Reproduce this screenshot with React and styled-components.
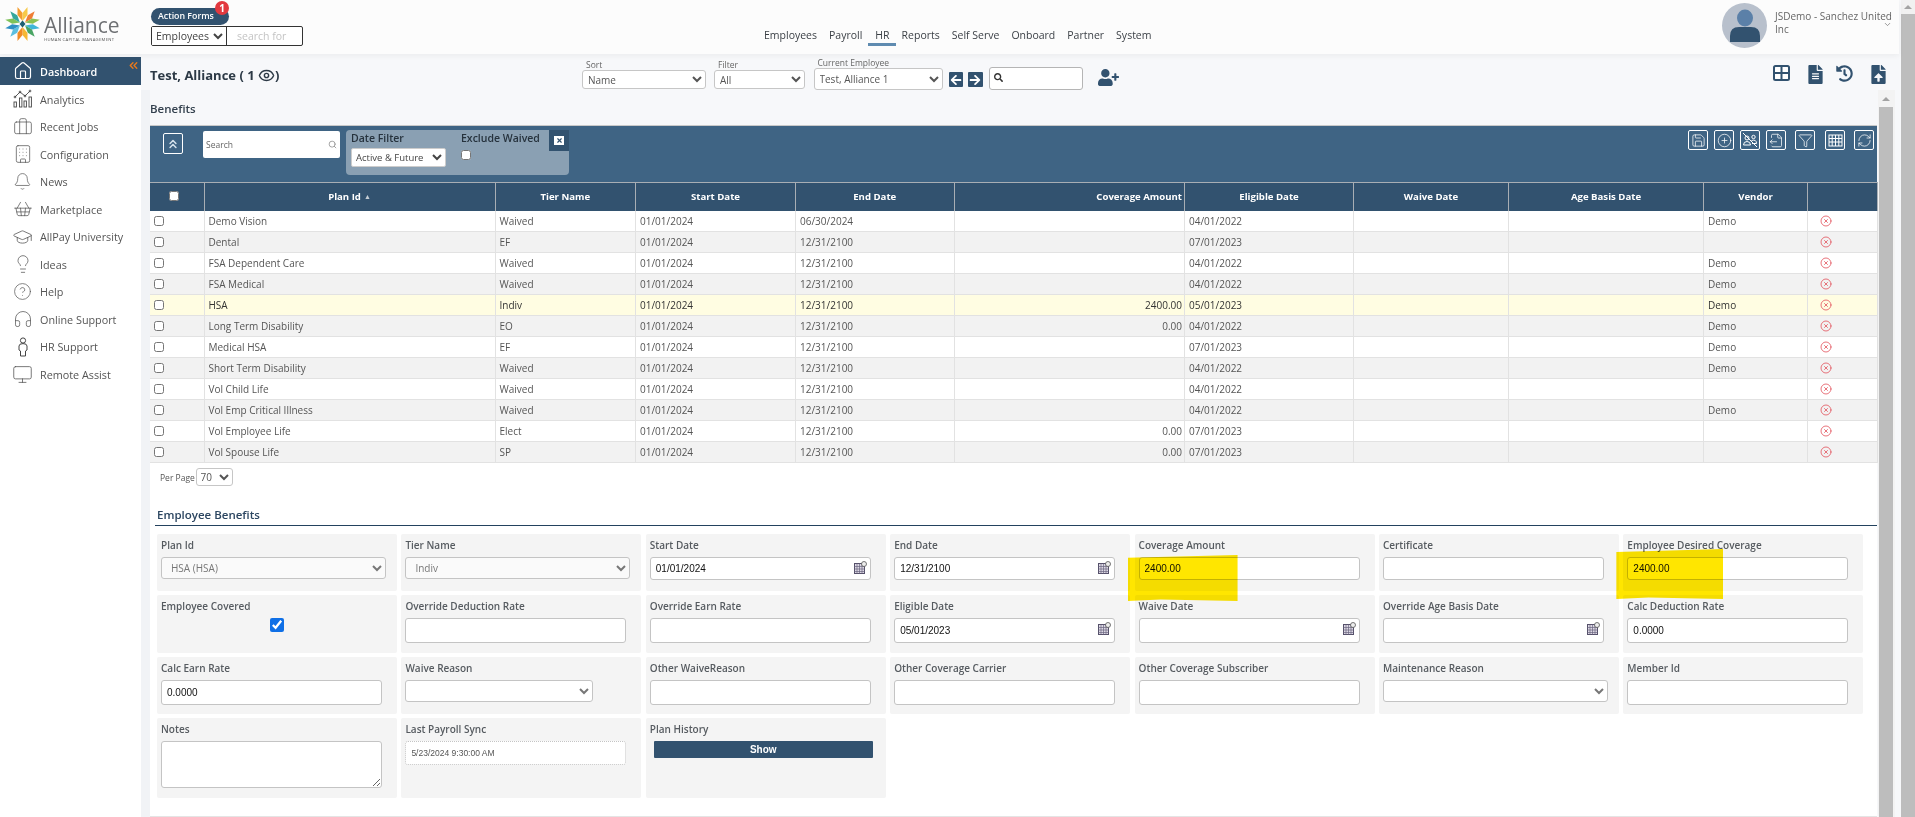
import React from "react";
import styled, { createGlobalStyle } from "styled-components";
import {
  Home, Briefcase, Building, Bell, ShoppingBasket, GraduationCap, Lightbulb,
  CircleHelp, Headphones, Monitor, ChevronsLeft, ChevronsUp, ChevronDown, Eye, Search,
  Save, CirclePlus, FileOutput, Filter, RefreshCw, CircleX, X,
} from "lucide-react";
import {
  FaFileAlt, FaHistory, FaFileUpload, FaUserPlus, FaArrowLeft, FaArrowRight, FaSearch,
} from "react-icons/fa";

const NAVY = "#32526f";
const FONT = `"Open Sans", "Noto Sans", sans-serif`;

const GlobalStyle = createGlobalStyle`
  html, body { margin: 0; padding: 0; height: 100%; overflow: hidden; }
  body { font-family: ${FONT}; background: #f7f8fa; color: #555; }
  * { box-sizing: border-box; }
`;

const Page = styled.div`
  display: flex;
  width: 1915px;
  height: 817px;
  overflow: hidden;
`;

const Shell = styled.div`
  display: flex;
  flex-direction: column;
  width: 1901px;
  height: 100%;
`;

const PageScroll = styled.div`
  width: 14px;
  display: flex;
  flex-direction: column;
  background: #f1f1f1;
`;

const ScrollArrow = styled.div`
  height: ${(p) => p.$h || 14}px;
  display: flex;
  align-items: center;
  justify-content: center;
  &::before {
    content: "";
    border-left: 4px solid transparent;
    border-right: 4px solid transparent;
    border-bottom: 4px solid #a3a3a3;
  }
`;

const ScrollThumb = styled.div`
  flex: 1;
  background: #bdbdbd;
`;

/* header */
const Header = styled.header`
  display: flex;
  flex: 0 0 54px;
  width: 1899px;
  background: #fcfcfc;
  box-shadow: 0 2px 6px rgba(0, 0, 0, 0.05);
  position: relative;
  z-index: 3;
`;

const LogoWrap = styled.div`
  width: 151px;
  display: flex;
  padding: 6px 0 0 4px;
`;

const LogoText = styled.div`
  display: flex;
  flex-direction: column;
  margin: 7px 0 0 3px;
`;

const LogoName = styled.span`
  font-size: 21px;
  line-height: 24px;
  color: #6e7073;
`;

const LogoSub = styled.span`
  font-size: 4.2px;
  line-height: 6px;
  color: #555;
  letter-spacing: 0.3px;
  white-space: nowrap;
`;

const ActionBox = styled.div`
  width: 152px;
  padding-top: 8px;
  display: flex;
  flex-direction: column;
`;

const ActionPill = styled.div`
  width: 78px;
  height: 17px;
  border-radius: 9px;
  background: ${NAVY};
  color: #fff;
  font-size: 8.8px;
  font-weight: 600;
  line-height: 17px;
  padding-left: 7px;
  position: relative;
`;

const Badge = styled.span`
  position: absolute;
  right: 0;
  top: -7px;
  width: 14px;
  height: 14px;
  border-radius: 50%;
  background: #e2393f;
  color: #fff;
  font-size: 10px;
  font-weight: 700;
  line-height: 14px;
  text-align: center;
`;

const QuickSearch = styled.div`
  display: flex;
  height: 20px;
  width: 152px;
  margin-top: 1px;
  border: 1px solid #333;
  border-radius: 2px;
  background: #fff;
`;

const QuickSelect = styled.select`
  width: 75px;
  border: 0;
  border-right: 1px solid #333;
  background: #fff;
  font-family: ${FONT};
  font-size: 10.5px;
  color: #444;
  padding: 0;
  outline: none;
`;

const QuickInput = styled.input`
  flex: 1;
  min-width: 0;
  border: 0;
  background: transparent;
  font-family: ${FONT};
  font-size: 10.5px;
  padding-left: 10px;
  outline: none;
  &::placeholder { color: #c4c4c4; }
`;

const Nav = styled.nav`
  display: flex;
  margin: 28px 0 0 455px;
  height: 18px;
`;

const NavItem = styled.a`
  height: 18px;
  padding: 0 6px 0 ${(p) => (p.$active ? 7 : 6)}px;
  font-size: 10.5px;
  font-weight: 500;
  line-height: 15px;
  color: #3a3f45;
  white-space: nowrap;
  border-bottom: 3px solid ${(p) => (p.$active ? "#5f8bb0" : "transparent")};
`;

const UserBlock = styled.div`
  display: flex;
  margin-left: auto;
  width: 177px;
  padding-top: 3px;
  position: relative;
`;

const UserName = styled.div`
  width: 118px;
  margin: 7px 0 0 8px;
  font-size: 10px;
  line-height: 13px;
  color: #666;
`;

const UserCaret = styled.span`
  position: absolute;
  right: 7px;
  top: 20px;
  display: flex;
  color: #777;
`;

/* body */
const Body = styled.div`
  flex: 1;
  display: flex;
  min-height: 0;
`;

const Sidebar = styled.aside`
  width: 141px;
  margin-top: 3px;
  background: #fff;
  position: relative;
`;

const Collapse = styled.span`
  position: absolute;
  right: 1px;
  top: 2px;
  display: flex;
  color: #e8791c;
`;

const SideItem = styled.a`
  display: flex;
  align-items: center;
  height: ${(p) => (p.$active ? 28 : 27.5)}px;
  margin-bottom: ${(p) => (p.$active ? 0.5 : 0)}px;
  padding-left: 12px;
  gap: 7px;
  background: ${(p) => (p.$active ? NAVY : "transparent")};
  color: ${(p) => (p.$active ? "#fff" : "#555")};
  font-size: 10.8px;
  font-weight: ${(p) => (p.$active ? 600 : 400)};
  white-space: nowrap;
`;

const SideIcon = styled.span`
  width: 21px;
  flex: 0 0 21px;
  display: flex;
  justify-content: center;
  align-items: center;
`;

const Main = styled.main`
  flex: 1;
  min-width: 0;
  display: flex;
  flex-direction: column;
  background: #f7f8fa;
`;

const TopRow = styled.div`
  flex: 0 0 36px;
  display: flex;
  padding: 0 13.5px 0 9px;
`;

const Title = styled.h1`
  width: 432px;
  margin: 13px 0 0;
  display: flex;
  align-items: center;
  height: 16px;
  font-size: 13px;
  font-weight: 700;
  color: #2d3a46;
  white-space: pre;
`;

const FilterField = styled.label`
  display: flex;
  flex-direction: column;
  width: ${(p) => p.$w}px;
  margin: ${(p) => p.$top}px ${(p) => p.$gap}px 0 0;
  font-size: 8.5px;
  line-height: 10px;
  color: #666;
`;

const FieldCaption = styled.span`
  padding-left: ${(p) => p.$indent || 4}px;
`;

const TopSelect = styled.select`
  width: 100%;
  height: ${(p) => p.$h}px;
  border: 1px solid #c6c6c6;
  border-radius: 3px;
  background: #fff;
  font-family: ${FONT};
  font-size: 10px;
  color: #555;
  padding-left: 1px;
  outline: none;
`;

const ArrowBtn = styled.button`
  width: 14.5px;
  height: 15px;
  margin: 18px 5px 0 0;
  padding: 0;
  border: 0;
  border-radius: 1px;
  background: ${NAVY};
  color: #fff;
  display: flex;
  align-items: center;
  justify-content: center;
`;

const TopSearch = styled.div`
  width: 94px;
  height: 23px;
  margin: 13px 15px 0 1px;
  border: 1px solid #b5b5b5;
  border-radius: 3px;
  background: #fff;
  display: flex;
  padding: 5px 0 0 4px;
  color: #333;
`;

const AddUser = styled.span`
  display: flex;
  margin-top: 13px;
  color: ${NAVY};
`;

const TopIcons = styled.div`
  display: flex;
  align-items: flex-start;
  margin: 11px 0 0 auto;
  color: ${NAVY};
`;

const TopIcon = styled.span`
  display: flex;
  margin-left: ${(p) => p.$gap || 0}px;
`;

const ScrollRow = styled.div`
  flex: 1;
  display: flex;
  min-height: 0;
`;

const Content = styled.div`
  width: 1736px;
  padding-left: 9px;
  background: linear-gradient(90deg, #f1f3f6 9px, transparent 9px);
`;

const SectionLabel = styled.h2`
  margin: 0;
  height: 35px;
  padding-top: 11px;
  font-size: 11.5px;
  line-height: 15px;
  font-weight: 600;
  color: #33404d;
  background: #f7f8fa;
`;

const InnerScroll = styled.div`
  width: 17px;
  margin-left: 0.5px;
  padding: 0 1.5px;
  display: flex;
  flex-direction: column;
  background: #f3f3f3;
`;

/* grid panel */
const GridBar = styled.div`
  height: 57px;
  display: flex;
  align-items: flex-start;
  background: #3f6484;
  border-top: 1px solid #c9c9c9;
`;

const CollapseBtn = styled.div`
  width: 20px;
  height: 21px;
  margin: 7px 0 0 13px;
  border: 1px solid #fff;
  border-radius: 2px;
  display: flex;
  align-items: center;
  justify-content: center;
  color: #d5e2ec;
`;

const GridSearch = styled.div`
  width: 137px;
  height: 27px;
  margin: 5px 0 0 20px;
  background: #fff;
  border-radius: 2px;
  display: flex;
  align-items: center;
  justify-content: space-between;
  padding: 0 3px;
  font-size: 8.5px;
  color: #666;
`;

const DatePanel = styled.div`
  width: 223px;
  height: 45px;
  margin: 4px 0 0 6px;
  padding: 1px 5px;
  background: #8aa0b3;
  border-radius: 4px;
  display: flex;
  position: relative;
`;

const DateCol = styled.div`
  width: ${(p) => p.$w}px;
  display: flex;
  flex-direction: column;
  font-size: 10.5px;
  font-weight: 600;
  line-height: 14px;
  color: #26323d;
  white-space: nowrap;
`;

const DateSelect = styled.select`
  width: 95px;
  height: 19px;
  margin-top: 3px;
  border: 1px solid #ccc;
  border-radius: 2px;
  background: #fff;
  font-family: ${FONT};
  font-size: 9.5px;
  color: #444;
  padding: 0;
  outline: none;
`;

const SmallCheck = styled.input.attrs({ type: "checkbox" })`
  width: 10px;
  height: 10px;
  margin: ${(p) => p.$m || 0};
  display: block;
`;

const PanelClose = styled.span`
  position: absolute;
  right: 0;
  top: 0;
  width: 20px;
  height: 21px;
  background: ${NAVY};
  display: flex;
  align-items: center;
  justify-content: center;
`;

const CloseMark = styled.span`
  width: 10px;
  height: 9px;
  background: #fff;
  display: flex;
  align-items: center;
  justify-content: center;
  color: ${NAVY};
`;

const GridTools = styled.div`
  display: flex;
  margin: 4px 3px 0 auto;
`;

const ToolBtn = styled.span`
  width: 20px;
  height: 20px;
  margin-left: ${(p) => p.$gap}px;
  border: 1px solid #fff;
  border-radius: 2px;
  color: #fff;
  display: flex;
  align-items: center;
  justify-content: center;
`;

const Table = styled.table`
  width: 1727px;
  table-layout: fixed;
  border-collapse: collapse;
`;

const Th = styled.th`
  height: 28px;
  padding: 0 ${(p) => (p.$right ? 2 : 4)}px 0 4px;
  background: ${NAVY};
  border: 1px solid #a8aeb4;
  border-width: 1px 1px 0 0;
  color: #fff;
  font-size: 9.6px;
  font-weight: 700;
  text-align: ${(p) => (p.$right ? "right" : "center")};
`;

const SortMark = styled.span`
  font-size: 7px;
  margin-left: 3px;
  color: #c5ced6;
  vertical-align: 1px;
`;

const Tr = styled.tr`
  height: 21px;
  background: ${(p) => (p.$current ? "#fffde2" : p.$alt ? "#f2f2f2" : "#fff")};
  color: ${(p) => (p.$current ? "#333" : "#555")};
`;

const Td = styled.td`
  padding: 0 ${(p) => (p.$right ? 2 : 4)}px 0 4px;
  border: 1px solid #e2e2e2;
  border-width: 0 1px 1px 0;
  font-size: 10px;
  line-height: 12px;
  text-align: ${(p) => (p.$right ? "right" : "left")};
  white-space: nowrap;
  overflow: hidden;
`;

const DeleteIcon = styled.span`
  display: flex;
  margin-left: 8px;
  color: #e2505a;
`;

const GridFoot = styled.div`
  height: 33px;
  display: flex;
  padding: 5px 0 0 10px;
  font-size: 8.5px;
  line-height: 20px;
  color: #555;
  background: #fff;
`;

const PerPageLabel = styled.span`
  width: 35.5px;
  white-space: nowrap;
`;

const PerPageSelect = styled.select`
  width: 37px;
  height: 18px;
  border: 1px solid #c6c6c6;
  border-radius: 3px;
  background: #fff;
  font-family: ${FONT};
  font-size: 10px;
  color: #555;
  padding: 0;
  outline: none;
`;

/* form */
const FormPanel = styled.section`
  background: #fff;
  height: 321px;
  padding-left: 5px;
  border-bottom: 1px solid #e4e4e4;
`;

const FormTitle = styled.h3`
  margin: 0;
  height: 30px;
  padding: 11px 0 0 2px;
  font-size: 11.5px;
  line-height: 16px;
  font-weight: 600;
  color: #2b4560;
  border-bottom: 1px solid #23425e;
`;

const FormGrid = styled.div`
  display: grid;
  grid-template-columns: repeat(7, 240px);
  grid-template-rows: 57px 58px 57px 80px;
  column-gap: 4.4px;
  row-gap: 4px;
  padding: 8px 0 0 2px;
`;

const Card = styled.div`
  position: relative;
  padding: 0 4px;
  background: #f4f4f4;
  border-radius: 2px;
`;

const FieldLabel = styled.div`
  height: 23px;
  font-size: 10px;
  font-weight: 600;
  line-height: 23px;
  color: #565b60;
  white-space: nowrap;
`;

const TextBox = styled.input`
  display: block;
  width: 221px;
  height: ${(p) => p.$h || 25}px;
  padding: 0 5px;
  border: 1px solid #c4c4c4;
  border-radius: 3px;
  background: #fff;
  font-family: "Liberation Sans", Arial, sans-serif;
  font-size: 10px;
  color: #111;
  outline: none;
`;

const FormSelect = styled.select`
  display: block;
  width: ${(p) => p.$w || 225}px;
  height: 22px;
  padding-left: 5px;
  border: 1px solid #c4c4c4;
  border-radius: 3px;
  background: ${(p) => (p.disabled ? "#fafafa" : "#fff")};
  opacity: 1;
  font-family: ${FONT};
  font-size: 10px;
  color: #777;
  outline: none;
`;

const DateWrap = styled.div`
  position: relative;
  width: 221px;
`;

const CalIcon = styled.svg`
  position: absolute;
  right: 4px;
  top: 4px;
`;

const CoveredCheck = styled.input.attrs({ type: "checkbox" })`
  display: block;
  width: 14px;
  height: 14px;
  margin: 0 0 0 109px;
  accent-color: #0f6fe6;
`;

const Notes = styled.textarea`
  display: block;
  width: 221px;
  height: 47px;
  border: 1px solid #c4c4c4;
  border-radius: 3px;
  background: #fff;
`;

const ReadOnlyBox = styled.div`
  width: 221px;
  height: 24px;
  padding-left: 5px;
  border: 1px dotted #c4c4c4;
  border-radius: 3px;
  background: #fff;
  font-family: "Liberation Sans", Arial, sans-serif;
  font-size: 8.5px;
  line-height: 22px;
  color: #555;
`;

const ShowBtn = styled.button`
  display: block;
  width: 219px;
  height: 17px;
  margin-left: 4px;
  padding: 0;
  border: 0;
  border-radius: 1px;
  background: ${NAVY};
  color: #fff;
  font-family: "Liberation Sans", Arial, sans-serif;
  font-size: 10px;
  font-weight: 700;
`;

/* marker strokes somebody painted on the screenshot */
const Marker = styled.span`
  position: absolute;
  left: -7px;
  top: ${(p) => p.$top}px;
  width: ${(p) => p.$w}px;
  height: ${(p) => p.$h}px;
  background: #ffe600;
  mix-blend-mode: multiply;
  clip-path: polygon(0 6%, 100% 0, 100% 100%, 30% 97%, 0 100%);
  z-index: 2;
`;

const COLS = [54, 291, 140.5, 160, 158.5, 230.5, 169, 155, 195, 104, 69.5];

const ROWS = [
  ["Demo Vision", "Waived", "06/30/2024", "", "04/01/2022", "Demo"],
  ["Dental", "EF", "12/31/2100", "", "07/01/2023", ""],
  ["FSA Dependent Care", "Waived", "12/31/2100", "", "04/01/2022", "Demo"],
  ["FSA Medical", "Waived", "12/31/2100", "", "04/01/2022", "Demo"],
  ["HSA", "Indiv", "12/31/2100", "2400.00", "05/01/2023", "Demo"],
  ["Long Term Disability", "EO", "12/31/2100", "0.00", "04/01/2022", "Demo"],
  ["Medical HSA", "EF", "12/31/2100", "", "07/01/2023", "Demo"],
  ["Short Term Disability", "Waived", "12/31/2100", "", "04/01/2022", "Demo"],
  ["Vol Child Life", "Waived", "12/31/2100", "", "04/01/2022", ""],
  ["Vol Emp Critical Illness", "Waived", "12/31/2100", "", "04/01/2022", "Demo"],
  ["Vol Employee Life", "Elect", "12/31/2100", "0.00", "07/01/2023", ""],
  ["Vol Spouse Life", "SP", "12/31/2100", "0.00", "07/01/2023", ""],
];

const AnalyticsIcon = () => (
  <svg width="20" height="20" viewBox="0 0 20 20" fill="none" stroke="#444" strokeWidth="0.9">
    <rect x="1" y="13" width="2.4" height="5" />
    <rect x="6.5" y="9" width="2.4" height="9" />
    <rect x="11" y="12" width="2.4" height="6" />
    <rect x="16" y="8" width="2.4" height="10" />
    <path d="M2 8 L7 3 L12 7 L17 2" />
    <circle cx="2" cy="8" r="0.9" />
    <circle cx="7" cy="3" r="0.9" />
    <circle cx="12" cy="7" r="0.9" />
    <circle cx="17" cy="2" r="0.9" />
  </svg>
);

const PersonIcon = () => (
  <svg width="14" height="20" viewBox="0 0 14 20" fill="none" stroke="#444" strokeWidth="1">
    <circle cx="7" cy="3.5" r="2.6" />
    <path d="M3 9 Q3 6.6 7 6.6 Q11 6.6 11 9 V13 L9.5 14 V19 H4.5 V14 L3 13 Z" />
  </svg>
);

const TilesIcon = () => (
  <svg width="17" height="16" viewBox="0 0 17 16">
    <rect x="1" y="1" width="15" height="14" rx="1.5" fill="#fff" stroke={NAVY} strokeWidth="2" />
    <path d="M8.5 1 V15 M1 8 H16" stroke={NAVY} strokeWidth="2" />
  </svg>
);

const NoPeopleIcon = () => (
  <svg width="16" height="16" viewBox="0 0 16 16" fill="none" stroke="#fff" strokeWidth="1">
    <circle cx="5" cy="6" r="2" />
    <path d="M1.5 13 Q1.5 9.5 5 9.5 Q8.5 9.5 8.5 13 Z" />
    <circle cx="11.5" cy="5" r="1.7" />
    <path d="M9.5 8.5 Q14.5 7 14.5 11.5 H10" />
    <path d="M1 1 L15 15" />
  </svg>
);

const TableIcon = () => (
  <svg width="15" height="15" viewBox="0 0 15 15" fill="none" stroke="#fff" strokeWidth="1">
    <rect x="1" y="2" width="13" height="11" />
    <path d="M1 5.5 H14 M1 9 H14 M4.2 2 V13 M7.5 2 V13 M10.8 2 V13" />
  </svg>
);

const SIDE = [
  ["Dashboard", <Home size={20} strokeWidth={1.4} />],
  ["Analytics", <AnalyticsIcon />],
  ["Recent Jobs", <Briefcase size={20} strokeWidth={0.9} />],
  ["Configuration", <Building size={20} strokeWidth={0.9} />],
  ["News", <Bell size={19} strokeWidth={0.9} />],
  ["Marketplace", <ShoppingBasket size={20} strokeWidth={0.9} />],
  ["AllPay University", <GraduationCap size={22} strokeWidth={0.9} />],
  ["Ideas", <Lightbulb size={20} strokeWidth={0.9} />],
  ["Help", <CircleHelp size={19} strokeWidth={0.9} />],
  ["Online Support", <Headphones size={20} strokeWidth={0.9} />],
  ["HR Support", <PersonIcon />],
  ["Remote Assist", <Monitor size={21} strokeWidth={0.9} />],
];

const Logo = () => {
  const petals = [
    [0, "#f39c2d", "#f7c948"],
    [60, "#ef7d34", "#8cc152"],
    [120, "#3fb6d8", "#4aa564"],
    [180, "#f7b733", "#f08a24"],
    [240, "#5cbfe0", "#2f8fc4"],
    [300, "#7fc25a", "#35a79c"],
  ];
  return (
    <svg width="37" height="36" viewBox="-18 -18 36 36">
      {petals.map(([a, c1, c2]) => (
        <g key={a} transform={`rotate(${a})`}>
          <polygon points="0,-3 -5,-9 -5,-17 0,-11" fill={c1} />
          <polygon points="0,-3 5,-9 5,-17 0,-11" fill={c2} />
        </g>
      ))}
      <polygon points="0,-3.4 3,0 0,3.4 -3,0" fill="#1e5f74" />
    </svg>
  );
};

const Avatar = () => (
  <svg width="45" height="45" viewBox="0 0 45 45">
    <circle cx="22.5" cy="22.5" r="22.5" fill="#b8c0cc" />
    <ellipse cx="23" cy="15" rx="8" ry="8.5" fill="#5b80a8" />
    <path d="M8 39 V33 Q8 24 17 24 H29 Q38 24 38 33 V39 Z" fill={NAVY} />
  </svg>
);

const Calendar = () => (
  <CalIcon width="13" height="13" viewBox="0 0 13 13">
    <rect x="0.5" y="2.5" width="10" height="10" fill="#dcd8e4" stroke="#55506a" />
    <path d="M0.5 5.5 H10.5 M0.5 8 H10.5 M0.5 10.5 H10.5 M3 2.5 V12.5 M5.5 2.5 V12.5 M8 2.5 V12.5" stroke="#6a6580" strokeWidth="0.7" />
    <circle cx="10" cy="3" r="2.5" fill="#eee" stroke="#555" strokeWidth="0.8" />
  </CalIcon>
);

const DateField = ({ label, value, h }) => (
  <Card>
    <FieldLabel>{label}</FieldLabel>
    <DateWrap>
      <TextBox $h={h} defaultValue={value} />
      <Calendar />
    </DateWrap>
  </Card>
);

const TextField = ({ label, value, h, children }) => (
  <Card>
    <FieldLabel>{label}</FieldLabel>
    <TextBox $h={h} defaultValue={value} />
    {children}
  </Card>
);

const SelectField = ({ label, value, w, disabled }) => (
  <Card>
    <FieldLabel>{label}</FieldLabel>
    <FormSelect $w={w} disabled={disabled}>
      <option>{value}</option>
    </FormSelect>
  </Card>
);

const TOOLS = [
  [<Save size={15} strokeWidth={1.2} />, 0],
  [<CirclePlus size={15} strokeWidth={1.2} />, 6],
  [<NoPeopleIcon />, 6],
  [<FileOutput size={15} strokeWidth={1.2} />, 6],
  [<Filter size={15} strokeWidth={1.2} />, 9],
  [<TableIcon />, 10],
  [<RefreshCw size={15} strokeWidth={1.2} />, 9],
];

export default function App() {
  return (
    <>
      <GlobalStyle />
      <Page>
        <Shell>
          <Header>
            <LogoWrap>
              <Logo />
              <LogoText>
                <LogoName>Alliance</LogoName>
                <LogoSub>HUMAN CAPITAL MANAGEMENT</LogoSub>
              </LogoText>
            </LogoWrap>
            <ActionBox>
              <ActionPill>
                Action Forms
                <Badge>1</Badge>
              </ActionPill>
              <QuickSearch>
                <QuickSelect>
                  <option>Employees</option>
                </QuickSelect>
                <QuickInput placeholder="search for" />
              </QuickSearch>
            </ActionBox>
            <Nav>
              {["Employees", "Payroll", "HR", "Reports", "Self Serve", "Onboard", "Partner", "System"].map((n) => (
                <NavItem key={n} $active={n === "HR"}>{n}</NavItem>
              ))}
            </Nav>
            <UserBlock>
              <Avatar />
              <UserName>JSDemo - Sanchez United Inc</UserName>
              <UserCaret><ChevronDown size={9} /></UserCaret>
            </UserBlock>
          </Header>
          <Body>
            <Sidebar>
              <Collapse><ChevronsLeft size={13} strokeWidth={2.6} /></Collapse>
              {SIDE.map(([name, icon], i) => (
                <SideItem key={name} $active={i === 0}>
                  <SideIcon>{icon}</SideIcon>
                  {name}
                </SideItem>
              ))}
            </Sidebar>
            <Main>
              <TopRow>
                <Title>
                  Test, Alliance ( 1 <Eye size={17} strokeWidth={2} />)
                </Title>
                <FilterField $w={124} $top={6} $gap={8}>
                  <FieldCaption>Sort</FieldCaption>
                  <TopSelect $h={19}><option>Name</option></TopSelect>
                </FilterField>
                <FilterField $w={90.5} $top={6} $gap={9}>
                  <FieldCaption>Filter</FieldCaption>
                  <TopSelect $h={19}><option>All</option></TopSelect>
                </FilterField>
                <FilterField $w={129} $top={4} $gap={6}>
                  <FieldCaption>Current Employee</FieldCaption>
                  <TopSelect $h={22}><option>Test, Alliance 1</option></TopSelect>
                </FilterField>
                <ArrowBtn><FaArrowLeft size={12} /></ArrowBtn>
                <ArrowBtn><FaArrowRight size={12} /></ArrowBtn>
                <TopSearch><FaSearch size={9} /></TopSearch>
                <AddUser><FaUserPlus size={21} /></AddUser>
                <TopIcons>
                  <TopIcon><TilesIcon /></TopIcon>
                  <TopIcon $gap={15.5}><FaFileAlt size={19} /></TopIcon>
                  <TopIcon $gap={11.5}><FaHistory size={17} /></TopIcon>
                  <TopIcon $gap={15.5}><FaFileUpload size={19} /></TopIcon>
                </TopIcons>
              </TopRow>
              <ScrollRow>
                <Content>
                  <SectionLabel>Benefits</SectionLabel>
                  <GridBar>
                    <CollapseBtn><ChevronsUp size={14} strokeWidth={2.6} /></CollapseBtn>
                    <GridSearch>
                      Search
                      <Search size={9} color="#888" />
                    </GridSearch>
                    <DatePanel>
                      <DateCol $w={110}>
                        Date Filter
                        <DateSelect><option>Active &amp; Future</option></DateSelect>
                      </DateCol>
                      <DateCol $w={90}>
                        Exclude Waived
                        <SmallCheck $m="5px 0 0 0" />
                      </DateCol>
                      <PanelClose>
                        <CloseMark><X size={7} strokeWidth={4} /></CloseMark>
                      </PanelClose>
                    </DatePanel>
                    <GridTools>
                      {TOOLS.map(([icon, gap], i) => (
                        <ToolBtn key={i} $gap={gap}>{icon}</ToolBtn>
                      ))}
                    </GridTools>
                  </GridBar>
                  <Table>
                    <colgroup>
                      {COLS.map((w, i) => <col key={i} width={w} />)}
                    </colgroup>
                    <thead>
                      <tr>
                        <Th><SmallCheck $m="-2px 0 0 15px" /></Th>
                        <Th>Plan Id<SortMark>▲</SortMark></Th>
                        <Th>Tier Name</Th>
                        <Th>Start Date</Th>
                        <Th>End Date</Th>
                        <Th $right>Coverage Amount</Th>
                        <Th>Eligible Date</Th>
                        <Th>Waive Date</Th>
                        <Th>Age Basis Date</Th>
                        <Th>Vendor</Th>
                        <Th />
                      </tr>
                    </thead>
                    <tbody>
                      {ROWS.map((r, i) => (
                        <Tr key={r[0]} $alt={i % 2 === 1} $current={r[0] === "HSA"}>
                          <Td><SmallCheck /></Td>
                          <Td>{r[0]}</Td>
                          <Td>{r[1]}</Td>
                          <Td>01/01/2024</Td>
                          <Td>{r[2]}</Td>
                          <Td $right>{r[3]}</Td>
                          <Td>{r[4]}</Td>
                          <Td />
                          <Td />
                          <Td>{r[5]}</Td>
                          <Td><DeleteIcon><CircleX size={12} strokeWidth={1.6} /></DeleteIcon></Td>
                        </Tr>
                      ))}
                    </tbody>
                  </Table>
                  <GridFoot>
                    <PerPageLabel>Per Page</PerPageLabel>
                    <PerPageSelect><option>70</option></PerPageSelect>
                  </GridFoot>
                  <FormPanel>
                    <FormTitle>Employee Benefits</FormTitle>
                    <FormGrid>
                      <SelectField label="Plan Id" value="HSA (HSA)" disabled />
                      <SelectField label="Tier Name" value="Indiv" disabled />
                      <DateField label="Start Date" value="01/01/2024" h={23} />
                      <DateField label="End Date" value="12/31/2100" h={23} />
                      <TextField label="Coverage Amount" value="2400.00" h={23}>
                        <Marker $top={21} $w={110} $h={46} />
                      </TextField>
                      <TextField label="Certificate" h={23} />
                      <TextField label="Employee Desired Coverage" value="2400.00" h={23}>
                        <Marker $top={15} $w={107} $h={50} />
                      </TextField>

                      <Card>
                        <FieldLabel>Employee Covered</FieldLabel>
                        <CoveredCheck defaultChecked />
                      </Card>
                      <TextField label="Override Deduction Rate" />
                      <TextField label="Override Earn Rate" />
                      <DateField label="Eligible Date" value="05/01/2023" />
                      <DateField label="Waive Date" />
                      <DateField label="Override Age Basis Date" />
                      <TextField label="Calc Deduction Rate" value="0.0000" />

                      <TextField label="Calc Earn Rate" value="0.0000" />
                      <SelectField label="Waive Reason" w={188} />
                      <TextField label="Other WaiveReason" />
                      <TextField label="Other Coverage Carrier" />
                      <TextField label="Other Coverage Subscriber" />
                      <SelectField label="Maintenance Reason" />
                      <TextField label="Member Id" />

                      <Card>
                        <FieldLabel>Notes</FieldLabel>
                        <Notes />
                      </Card>
                      <Card>
                        <FieldLabel>Last Payroll Sync</FieldLabel>
                        <ReadOnlyBox>5/23/2024 9:30:00 AM</ReadOnlyBox>
                      </Card>
                      <Card>
                        <FieldLabel>Plan History</FieldLabel>
                        <ShowBtn>Show</ShowBtn>
                      </Card>
                    </FormGrid>
                  </FormPanel>
                </Content>
                <InnerScroll>
                  <ScrollArrow $h={17} />
                  <ScrollThumb />
                </InnerScroll>
              </ScrollRow>
            </Main>
          </Body>
        </Shell>
        <PageScroll>
          <ScrollArrow />
          <ScrollThumb />
        </PageScroll>
      </Page>
    </>
  );
}
